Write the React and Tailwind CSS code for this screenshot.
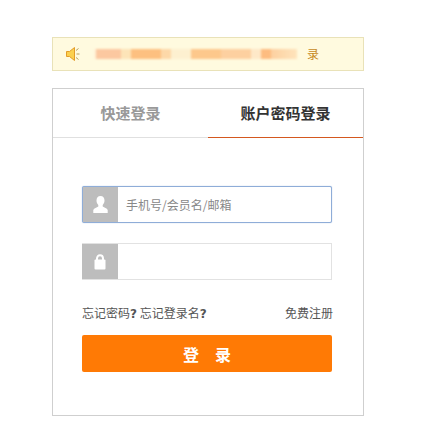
const cjk = { fontFamily: '"Noto Sans CJK SC", "Liberation Sans", sans-serif' };

function Speaker() {
  return (
    <svg width="14" height="16" viewBox="0 0 14 16" className="shrink-0">
      <path d="M0.5 5.5H3.5L8.5 1.5V14.5L3.5 10.5H0.5Z" fill="#fbd04f" stroke="#e39c2a" strokeWidth="1" />
      <path d="M10 4.5L12.5 2.5M10.5 8H13.5M10 11.5L12.5 13.5" stroke="#b9a060" strokeWidth="1" fill="none" />
    </svg>
  );
}

function UserIcon() {
  return (
    <svg width="15" height="17" viewBox="0 0 15 17">
      <path d="M7.5 0C4.9 0 3.5 2 3.5 4.6C3.5 6.6 4.3 8 5.3 9V10.6C3.8 12 1 12.2 0.3 14V17H14.7V14C14 12.2 11.2 12 9.7 10.6V9C10.7 8 11.5 6.6 11.5 4.6C11.5 2 10.1 0 7.5 0Z" fill="#fff" />
    </svg>
  );
}

function LockIcon() {
  return (
    <svg width="12" height="16" viewBox="0 0 12 16">
      <path d="M3 7V4.5C3 2.6 4.3 1.2 6 1.2S9 2.6 9 4.5V7" fill="none" stroke="#fff" strokeWidth="2" />
      <rect x="0.5" y="5.5" width="11" height="10" rx="1" fill="#fff" />
    </svg>
  );
}

function Mark() {
  return <span className="font-bold leading-none" style={{ fontFamily: '"DejaVu Sans", sans-serif' }}>?</span>;
}

export default function App() {
  return (
    <div className="min-h-[426px] w-[433px] bg-white pt-[37px] pl-[52px]" style={cjk}>
      <div className="flex h-[34px] w-[312px] items-center border border-[#e9e2b8] bg-[#fffadf] pl-[13px]">
        <Speaker />
        <div className="ml-[14px] flex h-[10px] w-[213px] items-center blur-[1px]">
          <span className="h-full w-[2px] bg-[#fff3d8]" />
          <span className="h-full w-[25px] bg-[#fcc8a0]" />
          <span className="h-full w-[10px] bg-[#fde4b8]" />
          <span className="h-full w-[30px] bg-[#fdc080]" />
          <span className="h-full w-[10px] bg-[#fdd8a8]" />
          <span className="h-full w-[20px] bg-[#fdf0d0]" />
          <span className="h-full w-[30px] bg-[#fdc88c]" />
          <span className="h-full w-[30px] bg-[#fdd0a0]" />
          <span className="h-full w-[10px] bg-[#fee8c8]" />
          <span className="h-full w-[10px] bg-[#fdbc80]" />
          <span className="h-full w-[26px] bg-gradient-to-r from-[#fdd0a0] to-[#fee4bc]" />
        </div>
        <span className="text-[12px] leading-none text-[#c78a1e]">录</span>
      </div>

      <div className="mt-[17px] h-[328px] w-[312px] border border-[#cfcfcf] bg-white">
        <div className="flex h-[49px] border-b border-[#e0e0e0]">
          <div className="flex flex-1 items-center justify-center text-[15px] font-bold text-[#999]">快速登录</div>
          <div className="-mb-px flex flex-1 items-center justify-center border-b border-b-[#d4581f] text-[15px] font-bold text-[#333]">账户密码登录</div>
        </div>

        <div className="flex flex-col px-[29px] pt-[48px]">
          <div className="flex h-[37px] w-[250px] rounded-[2px] border border-[#8fadd8] bg-white shadow-[0_0_1px_#8fadd8]">
            <div className="flex w-[35px] items-center justify-center bg-[#bdbdbd]">
              <UserIcon />
            </div>
            <span className="flex items-center pl-[8px] text-[12px] text-[#888]">手机号/会员名/邮箱</span>
          </div>
          <div className="mt-[20px] flex h-[37px] w-[250px] border border-l-0 border-[#e2e2e2] bg-white">
            <div className="flex w-[36px] items-center justify-center bg-[#bdbdbd]">
              <LockIcon />
            </div>
          </div>
          <div className="mt-[24px] flex h-[18px] w-[251px] items-center justify-between text-[12px] leading-[18px] text-[#555]">
            <span>忘记密码<Mark /> 忘记登录名<Mark /></span>
            <span>免费注册</span>
          </div>
          <button className="mt-[13px] flex h-[37px] w-[250px] items-center justify-center gap-4 rounded-[2px] bg-[#ff7a05] text-[16px] font-bold text-white">
            <span>登</span>
            <span>录</span>
          </button>
        </div>
      </div>
    </div>
  );
}
